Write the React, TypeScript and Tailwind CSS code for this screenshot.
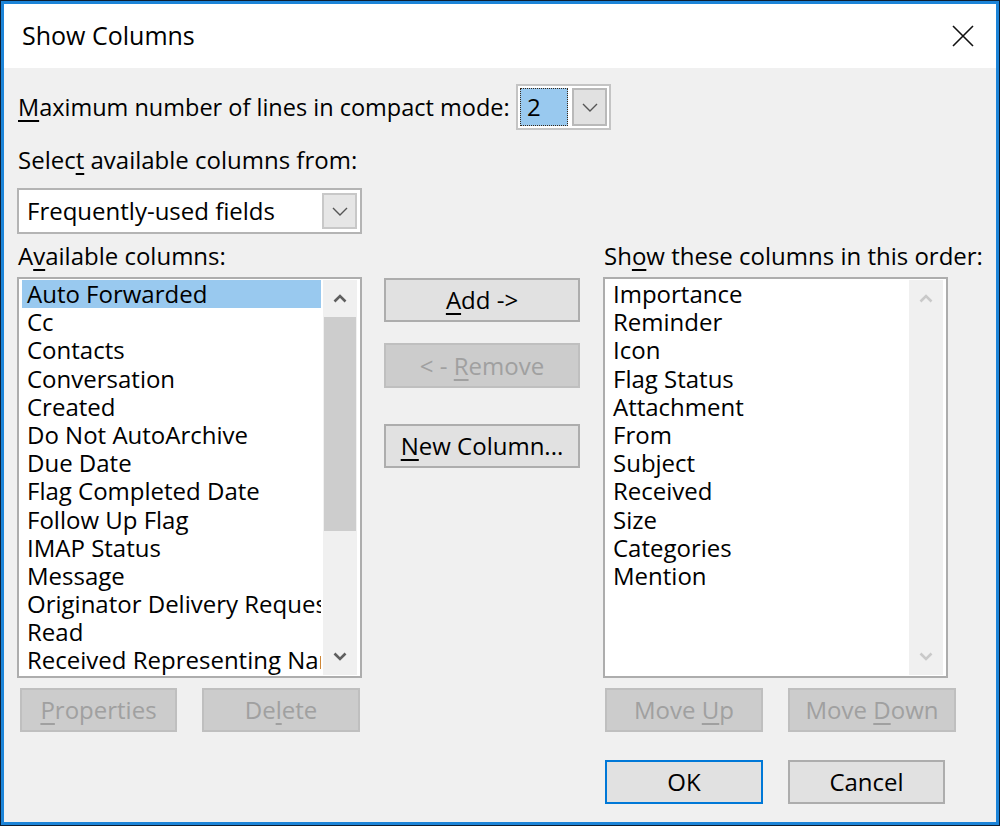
import React from "react";
import clsx from "clsx";

const availableColumns = [
  "Auto Forwarded",
  "Cc",
  "Contacts",
  "Conversation",
  "Created",
  "Do Not AutoArchive",
  "Due Date",
  "Flag Completed Date",
  "Follow Up Flag",
  "IMAP Status",
  "Message",
  "Originator Delivery Requested",
  "Read",
  "Received Representing Name",
];

const shownColumns = [
  "Importance",
  "Reminder",
  "Icon",
  "Flag Status",
  "Attachment",
  "From",
  "Subject",
  "Received",
  "Size",
  "Categories",
  "Mention",
];

// access key letter
const U = ({ children }: { children: React.ReactNode }) => (
  <span className="underline decoration-[1.5px] underline-offset-[4px]">{children}</span>
);

const ComboChevron = () => (
  <svg width="16" height="9" viewBox="0 0 16 9" className="text-[#555]">
    <path d="M1 1l7 7 7-7" fill="none" stroke="currentColor" strokeWidth="1.4" />
  </svg>
);

const ScrollArrow = ({ up, faded }: { up?: boolean; faded?: boolean }) => (
  <svg
    width="14"
    height="9"
    viewBox="0 0 14 9"
    className={faded ? "text-[#c9c9c9]" : "text-[#5f5f5f]"}
  >
    <path
      d={up ? "M1.5 7.5L7 2l5.5 5.5" : "M1.5 1.5L7 7l5.5-5.5"}
      fill="none"
      stroke="currentColor"
      strokeWidth="2.6"
    />
  </svg>
);

interface BtnProps {
  children: React.ReactNode;
  disabled?: boolean;
  primary?: boolean;
  className?: string;
}

const Btn: React.FC<BtnProps> = ({ children, disabled, primary, className }) => (
  <div
    className={clsx(
      "flex h-[44px] shrink-0 items-center justify-center border-2",
      disabled
        ? "border-[#bfbfbf] bg-[#cccccc] text-[#a0a0a0]"
        : primary
        ? "border-[#0078d7] bg-[#e1e1e1]"
        : "border-[#adadad] bg-[#e1e1e1]",
      className
    )}
  >
    <span className="whitespace-pre">{children}</span>
  </div>
);

interface ListBoxProps {
  items: string[];
  selected?: number;
  active?: boolean;
}

const ListBox: React.FC<ListBoxProps> = ({ items, selected, active }) => (
  <div className="flex h-[401px] w-[345px] shrink-0 border-2 border-[#adadad] bg-white px-[3px] py-px">
    <div className="w-[299px] overflow-hidden">
      {items.map((item, i) => (
        <div
          key={item}
          className={clsx(
            "h-[28.2px] whitespace-nowrap pl-[5px] leading-[28px]",
            i === selected && "bg-[#99c9ef]"
          )}
        >
          {item}
        </div>
      ))}
    </div>
    <div className="ml-[2px] flex w-[34px] flex-col bg-[#f0f0f0]">
      <div className="flex h-[37px] items-center justify-center">
        <ScrollArrow up faded={!active} />
      </div>
      {active && <div className="mx-px h-[214px] bg-[#cdcdcd]" />}
      <div className="flex-1" />
      <div className="flex h-[37px] items-center justify-center">
        <ScrollArrow faded={!active} />
      </div>
    </div>
  </div>
);

const App: React.FC = () => {
  return (
    <div className="h-[826px] w-[1000px] border border-[#0d1f33] font-['Open_Sans',sans-serif] text-[24px] text-black">
      <div className="flex h-full flex-col border-[3px] border-[#1c84d8]">
        {/* title bar */}
        <div className="flex h-[64px] shrink-0 items-center justify-between bg-white pl-[18px] pr-[22px]">
          <span className="text-[25px]">Show Columns</span>
          <svg width="22" height="22" viewBox="0 0 22 22">
            <path d="M1 1l20 20M21 1L1 21" stroke="#111" strokeWidth="1.6" fill="none" />
          </svg>
        </div>

        {/* body */}
        <div className="flex flex-1 flex-col bg-[#f0f0f0] px-[13px] pt-[16px]">
          <div className="flex h-[46px] items-center">
            <span className="w-[499px] whitespace-nowrap pl-px text-[23.5px] leading-[28px]">
              <U>M</U>aximum number of lines in compact mode:
            </span>
            <div className="flex h-[46px] w-[95px] items-center gap-[4px] border-2 border-[#c4c4c4] bg-white px-[2px]">
              <div className="flex h-[38px] w-[48px] items-center border border-dotted border-[#3a2a1a] bg-[#99c9ef] pl-[6px]">
                2
              </div>
              <div className="flex h-[38px] w-[35px] items-center justify-center border-2 border-[#b9b9b9] bg-[#e1e1e1]">
                <ComboChevron />
              </div>
            </div>
          </div>

          <div className="mt-4 h-[28px] pl-px leading-[28px]">
            Selec<U>t</U> available columns from:
          </div>

          <div className="mt-[14px] flex h-[46px] w-[345px] items-center justify-between border-2 border-[#b4b4b4] bg-white pl-[8px] pr-[3px]">
            <span>Frequently-used fields</span>
            <div className="flex h-[36px] w-[35px] items-center justify-center border-2 border-[#c8c8c8] bg-[#e6e6e6]">
              <ComboChevron />
            </div>
          </div>

          <div className="mt-[8px] flex h-[28px] leading-[28px]">
            <span className="w-[586px] pl-px">
              A<U>v</U>ailable columns:
            </span>
            <span className="whitespace-nowrap pl-px">
              Sh<U>o</U>w these columns in this order:
            </span>
          </div>

          <div className="mt-[7px] flex">
            <ListBox items={availableColumns} selected={0} active />
            <div className="ml-[22px] flex w-[196px] shrink-0 flex-col pt-px">
              <Btn>
                <U>A</U>dd -&gt;
              </Btn>
              <Btn disabled className="mt-[21px] h-[45px]">
                {"< - "}
                <U>R</U>emove
              </Btn>
              <Btn className="mt-[36px]">
                <U>N</U>ew Column...
              </Btn>
            </div>
            <div className="ml-[23px]">
              <ListBox items={shownColumns} />
            </div>
          </div>

          <div className="mt-[10px] flex">
            <Btn disabled className="ml-[3px] w-[157px]">
              <U>P</U>roperties
            </Btn>
            <Btn disabled className="ml-[25px] w-[158px]">
              De<U>l</U>ete
            </Btn>
            <Btn disabled className="ml-[245px] w-[158px]">
              {"Move "}
              <U>U</U>p
            </Btn>
            <Btn disabled className="ml-[25px] w-[168px]">
              {"Move "}
              <U>D</U>own
            </Btn>
          </div>

          <div className="mt-[28px] flex pl-[588px]">
            <Btn primary className="w-[158px]">
              OK
            </Btn>
            <Btn className="ml-[25px] w-[157px]">Cancel</Btn>
          </div>
        </div>
      </div>
    </div>
  );
};

export default App;
